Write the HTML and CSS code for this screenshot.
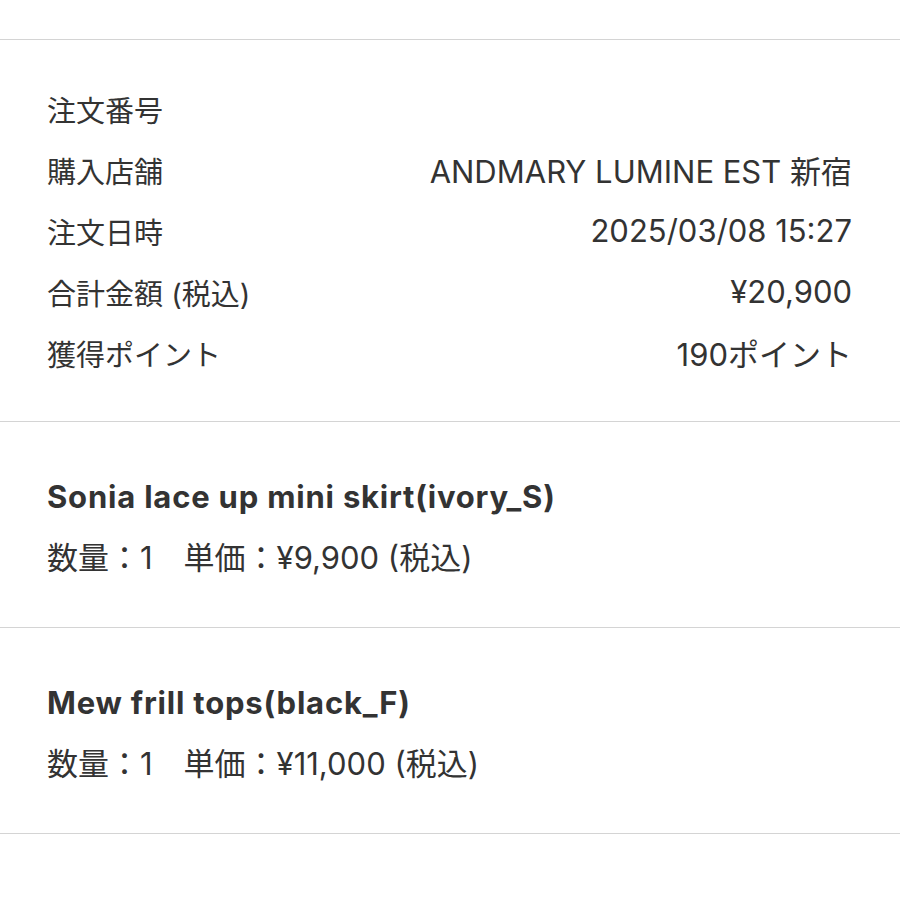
FILE: index.html
```html
<!DOCTYPE html>
<html lang="ja">
<head>
    <meta charset="UTF-8">
    <meta name="viewport" content="width=device-width, initial-scale=1.0">
    <title>注文詳細</title>
    <link rel="stylesheet" href="styles.css">
</head>
<body>
    <div class="order-page">
        <section class="order-info">
            <div class="info-row">
                <span class="label">注文番号</span>
                <span class="value"></span>
            </div>
            <div class="info-row">
                <span class="label">購入店舗</span>
                <span class="value">ANDMARY LUMINE EST 新宿</span>
            </div>
            <div class="info-row">
                <span class="label">注文日時</span>
                <span class="value">2025/03/08 15:27</span>
            </div>
            <div class="info-row">
                <span class="label">合計金額 (税込)</span>
                <span class="value">¥20,900</span>
            </div>
            <div class="info-row">
                <span class="label">獲得ポイント</span>
                <span class="value">190ポイント</span>
            </div>
        </section>

        <section class="order-item">
            <h3 class="item-name">Sonia lace up mini skirt(ivory_S)</h3>
            <p class="item-detail">数量：1　単価：¥9,900 (税込)</p>
        </section>

        <section class="order-item">
            <h3 class="item-name">Mew frill tops(black_F)</h3>
            <p class="item-detail">数量：1　単価：¥11,000 (税込)</p>
        </section>
    </div>
</body>
</html>
```

FILE: styles.css
```css
body {
    font-family: Inter, 'Noto Sans CJK JP', sans-serif;
    background-color: #fff;
    color: #333;
    margin: 0;
}

.order-page {
    padding-top: 39px;
}

.order-info,
.order-item {
    border-top: 1px solid #d4d4d4;
    padding: 0 48px 0 47px;
}

.order-item:last-child {
    border-bottom: 1px solid #d4d4d4;
}

.order-info {
    padding-top: 38px;
    padding-bottom: 38px;
}

.info-row {
    display: flex;
    justify-content: space-between;
    align-items: center;
    height: 61px;
}

.label {
    font-size: 29px;
}

.value {
    font-size: 31px;
    text-align: right;
}

.order-item {
    padding-top: 44px;
    padding-bottom: 39px;
}

.item-name {
    font-size: 31px;
    font-weight: bold;
    letter-spacing: 0.8px;
    line-height: 61px;
    margin: 0;
}

.item-detail {
    font-size: 31px;
    line-height: 61px;
    margin: 0;
}
```
